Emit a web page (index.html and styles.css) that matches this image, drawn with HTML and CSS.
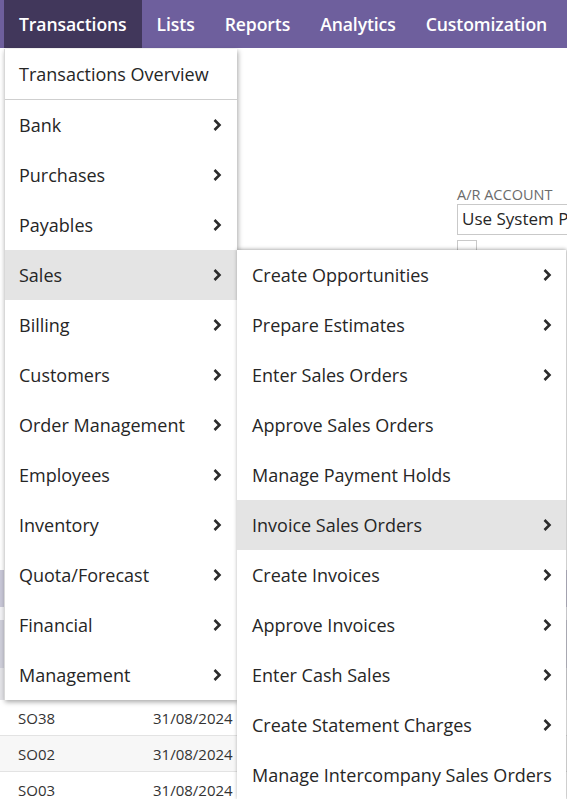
FILE: index.html
```html
<!DOCTYPE html>
<html>
<head>
<meta charset="utf-8">
<link rel="stylesheet" href="styles.css">
</head>
<body>
<nav class="topnav">
  <span class="tab active">Transactions</span>
  <span class="tab">Lists</span>
  <span class="tab">Reports</span>
  <span class="tab">Analytics</span>
  <span class="tab">Customization</span>
</nav>

<main class="page">
  <section class="form">
    <div class="field">
      <label class="label">A/R ACCOUNT</label>
      <div class="select">Use System Preference</div>
      <div class="checkbox"></div>
    </div>
  </section>
  <section class="grid">
    <div class="strip strip-head"></div>
    <div class="strip-gap"></div>
    <div class="strip strip-row"></div>
    <div class="strip strip-row2"></div>
    <div class="row"><span class="c1">SO38</span><span class="c2">31/08/2024</span></div>
    <div class="row alt"><span class="c1">SO02</span><span class="c2">31/08/2024</span></div>
    <div class="row"><span class="c1">SO03</span><span class="c2">31/08/2024</span></div>
  </section>
</main>

<ul class="menu">
  <li class="item overview">Transactions Overview</li>
  <li class="item">Bank<svg class="chev" viewBox="0 0 10 14"><path d="M2.5 2 L7.5 7 L2.5 12"/></svg></li>
  <li class="item">Purchases<svg class="chev" viewBox="0 0 10 14"><path d="M2.5 2 L7.5 7 L2.5 12"/></svg></li>
  <li class="item">Payables<svg class="chev" viewBox="0 0 10 14"><path d="M2.5 2 L7.5 7 L2.5 12"/></svg></li>
  <li class="item hl">Sales<svg class="chev" viewBox="0 0 10 14"><path d="M2.5 2 L7.5 7 L2.5 12"/></svg></li>
  <li class="item">Billing<svg class="chev" viewBox="0 0 10 14"><path d="M2.5 2 L7.5 7 L2.5 12"/></svg></li>
  <li class="item">Customers<svg class="chev" viewBox="0 0 10 14"><path d="M2.5 2 L7.5 7 L2.5 12"/></svg></li>
  <li class="item">Order Management<svg class="chev" viewBox="0 0 10 14"><path d="M2.5 2 L7.5 7 L2.5 12"/></svg></li>
  <li class="item">Employees<svg class="chev" viewBox="0 0 10 14"><path d="M2.5 2 L7.5 7 L2.5 12"/></svg></li>
  <li class="item">Inventory<svg class="chev" viewBox="0 0 10 14"><path d="M2.5 2 L7.5 7 L2.5 12"/></svg></li>
  <li class="item">Quota/Forecast<svg class="chev" viewBox="0 0 10 14"><path d="M2.5 2 L7.5 7 L2.5 12"/></svg></li>
  <li class="item">Financial<svg class="chev" viewBox="0 0 10 14"><path d="M2.5 2 L7.5 7 L2.5 12"/></svg></li>
  <li class="item">Management<svg class="chev" viewBox="0 0 10 14"><path d="M2.5 2 L7.5 7 L2.5 12"/></svg></li>
</ul>

<ul class="submenu">
  <li class="item">Create Opportunities<svg class="chev" viewBox="0 0 10 14"><path d="M2.5 2 L7.5 7 L2.5 12"/></svg></li>
  <li class="item">Prepare Estimates<svg class="chev" viewBox="0 0 10 14"><path d="M2.5 2 L7.5 7 L2.5 12"/></svg></li>
  <li class="item">Enter Sales Orders<svg class="chev" viewBox="0 0 10 14"><path d="M2.5 2 L7.5 7 L2.5 12"/></svg></li>
  <li class="item">Approve Sales Orders</li>
  <li class="item">Manage Payment Holds</li>
  <li class="item hl">Invoice Sales Orders<svg class="chev" viewBox="0 0 10 14"><path d="M2.5 2 L7.5 7 L2.5 12"/></svg></li>
  <li class="item">Create Invoices<svg class="chev" viewBox="0 0 10 14"><path d="M2.5 2 L7.5 7 L2.5 12"/></svg></li>
  <li class="item">Approve Invoices<svg class="chev" viewBox="0 0 10 14"><path d="M2.5 2 L7.5 7 L2.5 12"/></svg></li>
  <li class="item">Enter Cash Sales<svg class="chev" viewBox="0 0 10 14"><path d="M2.5 2 L7.5 7 L2.5 12"/></svg></li>
  <li class="item">Create Statement Charges<svg class="chev" viewBox="0 0 10 14"><path d="M2.5 2 L7.5 7 L2.5 12"/></svg></li>
  <li class="item">Manage Intercompany Sales Orders</li>
</ul>
</body>
</html>
```

FILE: styles.css
```css
* { box-sizing: border-box; }
html, body {
  margin: 0;
  padding: 0;
  width: 567px;
  height: 799px;
  overflow: hidden;
  background: #fff;
  font-family: "Open Sans", "Liberation Sans", sans-serif;
  color: #262626;
}
.topnav {
  display: flex;
  height: 48px;
  background: #6e5f9d;
  padding-left: 4px;
  white-space: nowrap;
}
.tab {
  display: flex;
  align-items: center;
  padding: 0 15px;
  color: #fff;
  font-size: 17.6px;
  font-weight: 600;
  letter-spacing: -0.1px;
}
.tab.active {
  background: #41375b;
}
.page {
  position: relative;
}
.form {
  height: 652px;
  padding-top: 137px;
  padding-left: 457px;
}
.label {
  display: block;
  font-size: 14.5px;
  color: #6b6b6b;
  line-height: 19px;
  white-space: nowrap;
}
.select {
  width: 110px;
  height: 31px;
  border: 1px solid #c9c9c9;
  border-right: none;
  font-size: 17px;
  line-height: 28px;
  padding-left: 4px;
  white-space: nowrap;
  overflow: hidden;
  color: #262626;
}
.checkbox {
  margin-top: 5px;
  width: 20px;
  height: 20px;
  border: 1px solid #c9c9c9;
}
.grid {
  position: absolute;
  left: 0;
  top: 522px;
  width: 567px;
}
.strip { width: 100%; }
.strip-head { height: 37px; background: #c9c8d8; }
.strip-gap { height: 13px; background: #f3f3f6; }
.strip-row { height: 48px; background: #cfcfda; }
.strip-row2 { height: 32px; background: #e4e4e8; }
.row {
  display: flex;
  height: 36px;
  align-items: center;
  border-bottom: 1px solid #e3e3e3;
  font-size: 15px;
  color: #333;
  padding-bottom: 12px;
  padding-top: 12px;
}
.row.alt { background: #f7f7f7; }
.c1 { width: 153px; padding-left: 18px; }

.menu, .submenu {
  list-style: none;
  margin: 0;
  padding: 0;
  position: absolute;
  background: #fff;
}
.menu {
  left: 4px;
  top: 49px;
  width: 233px;
  border-left: 1px solid #d8d8d8;
  box-shadow: 1px 2px 5px rgba(0,0,0,0.35);
}
.submenu {
  left: 237px;
  top: 250px;
  width: 329px;
  box-shadow: 0 -1px 4px rgba(0,0,0,0.22), 1px 0 3px rgba(0,0,0,0.18);
}
.item {
  height: 50px;
  display: flex;
  align-items: center;
  justify-content: space-between;
  padding: 0 15px 0 14px;
  font-size: 18px;
  font-weight: 500;
  white-space: nowrap;
  color: #262626;
}
.submenu .item {
  padding: 0 14px 0 15px;
}
.item.overview {
  height: 51px;
  border-bottom: 1px solid #cfcfcf;
}
.item.hl { background: #e4e4e4; }
.chev {
  width: 10px;
  height: 14px;
  flex: none;
}
.chev path {
  fill: none;
  stroke: #2b2b2b;
  stroke-width: 2.6;
}
```
